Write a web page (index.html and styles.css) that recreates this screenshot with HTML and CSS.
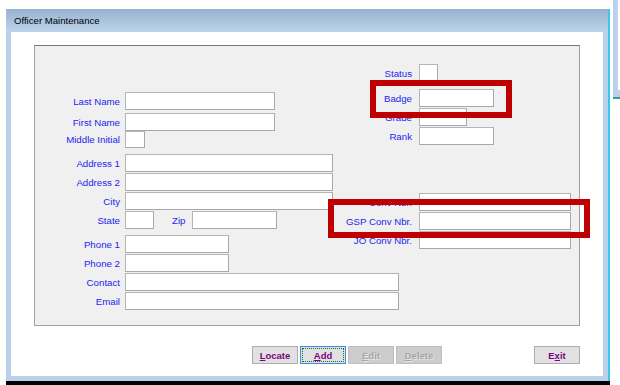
FILE: index.html
```html
<!DOCTYPE html>
<html>
<head>
<meta charset="utf-8">
<link rel="stylesheet" href="styles.css">
</head>
<body>
<div class="bgwin"><div class="bgwin-inner"></div></div>
<div class="window">
  <div class="titlebar">Officer Maintenance</div>
  <div class="frame">
    <div class="client">
      <div class="panel">
        <div class="col col-left">
          <div class="row"><label class="lbl">Last Name</label><input class="tb w150"></div>
          <div class="row g3"><label class="lbl">First Name</label><input class="tb w150"></div>
          <div class="row g0 h17"><label class="lbl">Middle Initial</label><input class="tb w20"></div>
          <div class="row g6"><label class="lbl">Address 1</label><input class="tb w208"></div>
          <div class="row"><label class="lbl">Address 2</label><input class="tb w208"></div>
          <div class="row"><label class="lbl">City</label><input class="tb w208"></div>
          <div class="row"><label class="lbl">State</label><input class="tb w29"><label class="zip">Zip</label><input class="tb w85"></div>
          <div class="row g6"><label class="lbl">Phone 1</label><input class="tb w104"></div>
          <div class="row"><label class="lbl">Phone 2</label><input class="tb w104"></div>
          <div class="row"><label class="lbl">Contact</label><input class="tb w274"></div>
          <div class="row"><label class="lbl">Email</label><input class="tb w274"></div>
        </div>
        <div class="col col-right">
          <div class="row"><label class="lbl">Status</label><input class="tb w19"></div>
          <div class="row g7"><label class="lbl">Badge</label><input class="tb w75"></div>
          <div class="row"><label class="lbl">Grade</label><input class="tb w48"></div>
          <div class="row"><label class="lbl">Rank</label><input class="tb w75"></div>
          <div class="row g48"><label class="lbl">Conv Nbr.</label><input class="tb w152"></div>
          <div class="row"><label class="lbl">GSP Conv Nbr.</label><input class="tb w152"></div>
          <div class="row"><label class="lbl">JO Conv Nbr.</label><input class="tb w152"></div>
        </div>
        <div class="mark mark-badge"></div>
        <div class="mark mark-gsp"></div>
      </div>
      <div class="buttons">
        <button class="btn"><u>L</u>ocate</button>
        <button class="btn focus"><u>A</u>dd</button>
        <button class="btn disabled"><u>E</u>dit</button>
        <button class="btn disabled"><u>D</u>elete</button>
        <button class="btn exit">E<u>x</u>it</button>
      </div>
    </div>
  </div>
</div>
<div class="taskbar"></div>
</body>
</html>
```
FILE: styles.css
```css
html, body {
  margin: 0;
  padding: 0;
  background: #ffffff;
  font-family: "Liberation Sans", Arial, sans-serif;
  width: 620px;
  height: 385px;
  overflow: hidden;
  position: relative;
}

.window {
  margin: 9px 0 0 6px;
  width: 602px;
  border-right: 2px solid #3ec6ee;
}

.titlebar {
  height: 23px;
  line-height: 24px;
  padding-left: 8px;
  font-size: 9.6px;
  color: #000;
  background: linear-gradient(#98b3d1, #bcd3ea);
}

.frame {
  background: #b9d1ea;
  padding: 0 5px 5px 5px;
}

.client {
  background: #ffffff;
  height: 344px;
  padding-top: 13px;
  box-sizing: border-box;
}

.panel {
  position: relative;
  margin-left: 23px;
  width: 546px;
  height: 281px;
  box-sizing: border-box;
  background: #f0f0f0;
  border: 1px solid #a0a0a0;
  border-top-color: #7a7a7a;
  display: grid;
}

.col {
  grid-area: 1 / 1;
  display: flex;
  flex-direction: column;
}

.col-left {
  padding-top: 46px;
}

.col-right {
  padding-top: 18px;
  padding-left: 300px;
}

.row {
  display: flex;
  align-items: center;
  height: 18px;
  margin-top: 1px;
}

.row:first-child { margin-top: 0; }
.row.g0 { margin-top: 0; }
.row.g3 { margin-top: 3px; }
.row.g6 { margin-top: 6px; }
.row.g7 { margin-top: 7px; }
.row.g48 { margin-top: 48px; }
.row.h17 { height: 17px; }

.lbl {
  font-size: 9.7px;
  color: #2424f0;
  text-align: right;
  flex: none;
  width: 85px;
  margin-right: 5px;
  white-space: nowrap;
}

.col-right .lbl {
  width: 77px;
  margin-right: 7px;
}

.zip {
  font-size: 9.7px;
  color: #2424f0;
  margin-left: 18px;
  margin-right: 7px;
}

.tb {
  flex: none;
  height: 100%;
  box-sizing: border-box;
  margin: 0;
  padding: 0;
  background: #ffffff;
  border: 1px solid #b5b5b5;
  border-right-color: #a8a8a8;
  border-bottom-color: #a8a8a8;
}

.w19 { width: 19px; }
.w20 { width: 20px; }
.w29 { width: 29px; }
.w48 { width: 48px; }
.w75 { width: 75px; }
.w85 { width: 85px; }
.w104 { width: 104px; }
.w150 { width: 150px; }
.w152 { width: 152px; }
.w208 { width: 208px; }
.w274 { width: 274px; }

.mark {
  position: absolute;
  border: 6px solid #c00000;
  box-sizing: border-box;
}

.mark-badge {
  left: 335px;
  top: 34px;
  width: 142px;
  height: 38px;
}

.mark-gsp {
  left: 293px;
  top: 153px;
  width: 262px;
  height: 39px;
}

.buttons {
  display: flex;
  gap: 2px;
  margin-top: 20px;
  padding-left: 241px;
  padding-right: 23px;
}

.btn {
  width: 46px;
  height: 18px;
  box-sizing: border-box;
  margin: 0;
  padding: 0;
  font-family: "Liberation Sans", Arial, sans-serif;
  font-size: 9.5px;
  font-weight: bold;
  color: #800080;
  background: #e1e1e1;
  border: 1px solid #adadad;
}

.btn.focus {
  border-color: #3c8fe0;
  outline: 1px dotted #1d6e1d;
  outline-offset: -3px;
}

.btn.disabled {
  color: #a6a6a6;
  background: #cccccc;
  border-color: #bfbfbf;
  text-shadow: 1px 1px 0 #e8e8e8;
}

.btn.exit {
  margin-left: auto;
}

.taskbar {
  margin-left: 6px;
  width: 604px;
  height: 4px;
  background: #000000;
}

.bgwin {
  position: absolute;
  left: 613px;
  top: 0;
  width: 7px;
  height: 97px;
  background: #b9d1ea;
  border-bottom: 2px solid #3a9aa0;
}

.bgwin-inner {
  margin-left: 4px;
  height: 90px;
  background: #ffffff;
  border-left: 1px solid #c8d8e8;
}
```
